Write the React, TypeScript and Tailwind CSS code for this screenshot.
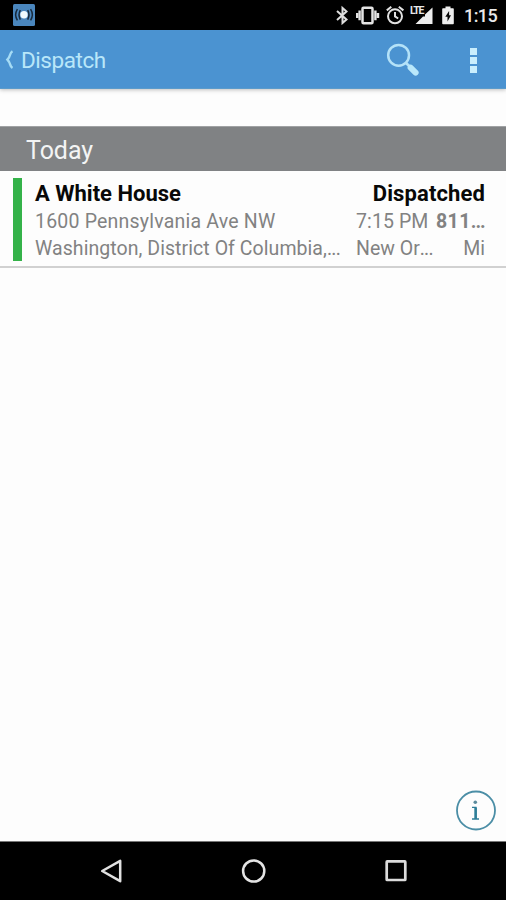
import React from "react";

function AppBadge() {
  return (
    <svg width="22" height="22" viewBox="0 0 22 22" className="block">
      <rect width="22" height="22" rx="1.5" fill="#4a86bd" />
      <g fill="none" stroke="#17293b" strokeWidth="1.5">
        <path d="M7.3 6.2Q4.8 10.8 7.3 15.6M14.7 6.2Q17.2 10.8 14.7 15.6" />
        <path d="M4.4 5.2Q0.9 10.8 4.4 16.4M17.6 5.2Q21.1 10.8 17.6 16.4" />
      </g>
      <circle cx="11" cy="10.8" r="3.7" fill="#f1fbff" />
    </svg>
  );
}

function StatusIcons() {
  return (
    <div className="flex items-center">
      <svg width="13" height="20" viewBox="0 0 13 20" className="mr-[7px]" fill="none" stroke="#dedede" strokeWidth="2">
        <path d="M1 6 10.5 14.5 6.5 18V3L10.5 6.5 1 15" />
      </svg>
      <svg width="24" height="20" viewBox="0 0 24 20" className="mr-[6px]" fill="none" stroke="#e4e4e4">
        <rect x="6.5" y="2.8" width="10" height="15.4" rx="1" strokeWidth="2.5" />
        <path d="M3.6 5.5V15.3M19.4 5.5V15.3M1 8V13M22 8V13" strokeWidth="2.4" />
      </svg>
      <svg width="19" height="20" viewBox="0 0 19 20" className="mr-[6px]" fill="none" stroke="#e2e2e2" strokeWidth="2">
        <circle cx="9" cy="11.3" r="7" />
        <path d="M.8 5.4 5.3 1.8M17.4 5.4 12.8 1.8M9 7V11.4L12.2 13.5" />
      </svg>
      <div className="relative mr-[8px] h-5 w-[23px]">
        <svg width="23" height="20" viewBox="0 0 23 20" className="block">
          <path d="M21.5 2.5V19H4.5L12 11.5H14V9.5Z" fill="#ededed" />
        </svg>
        <span className="absolute -left-px top-px text-[10.5px] font-bold leading-[10px] tracking-[-1.2px] text-[#e6e6e6]">LTE</span>
      </div>
      <svg width="13" height="20" viewBox="0 0 13 20" className="mr-[9px]">
        <path d="M3.5 1.5H8.5V3.3H11Q11.8 3.3 11.8 4.1V18.4Q11.8 19.2 11 19.2H1Q.2 19.2 .2 18.4V4.1Q.2 3.3 1 3.3H3.5Z" fill="#eee" />
        <path d="M7.1 6 3.3 11.7H5.5V16.5L9 10.3H7.1Z" fill="#080808" />
      </svg>
      <span className="w-[34px] whitespace-nowrap pt-px text-[18px] font-medium leading-5 tracking-[-0.6px] text-[#e9e9e9]">1:15</span>
    </div>
  );
}

export default function App() {
  return (
    <div className="flex h-[900px] w-[506px] flex-col overflow-hidden bg-[#fdfdfd] font-['Roboto',sans-serif]">
      <div className="flex h-[30px] shrink-0 items-center justify-between bg-black pl-[13px] pr-[8px]">
        <AppBadge />
        <StatusIcons />
      </div>

      <header className="flex h-[59px] shrink-0 items-center border-b border-[#5b9bcb] bg-[#4b93d1] pl-[5px] shadow-[0_1px_4px_rgba(0,0,0,0.25)]">
        <svg width="10" height="20" viewBox="0 0 10 20" className="mr-[6px] mt-[2px]" fill="none" stroke="#a6dcf5" strokeWidth="2.4">
          <path d="M7.5 1.2Q5.8 2.2 5.1 4.8Q4.4 7.5 2.4 9.6Q4.4 11.7 5.1 14.4Q5.8 17 7.5 18" />
        </svg>
        <h1 className="flex-1 pt-px text-[22.5px] font-normal leading-7 tracking-[-0.45px] text-[#b9e7f9]">Dispatch</h1>
        <svg width="35" height="35" viewBox="0 0 35 35" className="mr-[49px] mt-px" fill="none">
          <circle cx="12.6" cy="13.3" r="10.4" stroke="#b4e2f8" strokeWidth="2.5" />
          <path d="M20 21 25 25.7" stroke="#b4e2f8" strokeWidth="2.7" />
          <path d="M24.6 25.7 29.6 30.6" stroke="#b9e8fb" strokeWidth="6" strokeLinecap="round" />
        </svg>
        <div className="mr-[29px] mt-[3px] flex flex-col gap-[2px]">
          <span className="size-[7px] bg-[#c9eefd]" />
          <span className="size-[7px] bg-[#c9eefd]" />
          <span className="size-[7px] bg-[#c9eefd]" />
        </div>
      </header>

      <main className="flex flex-1 flex-col pt-[37px]">
        <h2 className="flex h-[45px] items-center border-t border-[#a0a2a4] bg-[#808284] pl-[26px] pt-[3px] text-[25px] font-normal tracking-[-0.05px] text-[#f3f4f4]">Today</h2>
        <div className="flex h-[97px] border-b-2 border-[#d1d1d1] pl-[13px] pt-[7px]">
          <div className="mr-[13px] h-[83px] w-[9px] shrink-0 bg-[#34b249]" />
          <div className="w-[450px] text-[19.5px] leading-[27px] text-[#828282]">
            <div className="flex justify-between pb-px pt-[2px] text-[22px] font-bold text-[#080808]">
              <span>A White House</span>
              <span className="tracking-[0.12px]">Dispatched</span>
            </div>
            <div className="flex whitespace-nowrap">
              <span className="w-[321px] tracking-[0.2px]">1600 Pennsylvania Ave NW</span>
              <span className="w-[80px] tracking-[0.1px]">7:15 PM</span>
              <span className="font-bold tracking-[0.4px]">811<span className="tracking-[-1px]">...</span></span>
            </div>
            <div className="flex whitespace-nowrap">
              <span className="w-[321px] tracking-[0.06px]">Washington, District Of Columbia,<span className="tracking-[-0.7px]">...</span></span>
              <span className="flex-1">New Or<span className="tracking-[-0.8px]">...</span></span>
              <span>Mi</span>
            </div>
          </div>
        </div>
        <div className="mt-auto flex justify-end pb-[9px] pr-[9px]">
          <svg width="42" height="42" viewBox="0 0 42 42" fill="none">
            <circle cx="21" cy="20.5" r="19" stroke="#4b8ea6" strokeWidth="1.8" />
            <circle cx="20.3" cy="12.2" r="1.8" fill="#5c8b9c" />
            <path d="M17 17.4H20.9V29M17 29H24" stroke="#2f7e98" strokeWidth="1.3" />
            <path d="M20.6 17.5V29" stroke="#2f7e98" strokeWidth="2.6" />
          </svg>
        </div>
      </main>

      <nav className="flex h-[59px] shrink-0 items-center border-t border-[#777] bg-black pl-[99px]" aria-label="System">
        <svg width="24" height="26" viewBox="0 0 24 26" className="mr-[118px]" fill="none" stroke="#e1e1e1" strokeWidth="2.5" strokeLinejoin="round">
          <path d="M3.2 13 21.2 2.8V23.2Z" />
        </svg>
        <svg width="26" height="26" viewBox="0 0 26 26" className="mr-[118px]" fill="none">
          <circle cx="12.7" cy="13" r="10.6" stroke="#e4e4e4" strokeWidth="2.5" />
        </svg>
        <svg width="22" height="22" viewBox="0 0 22 22" fill="none">
          <rect x="1.7" y="1.4" width="18.6" height="18.6" rx=".5" stroke="#dcdcdc" strokeWidth="2.7" />
        </svg>
      </nav>
    </div>
  );
}
